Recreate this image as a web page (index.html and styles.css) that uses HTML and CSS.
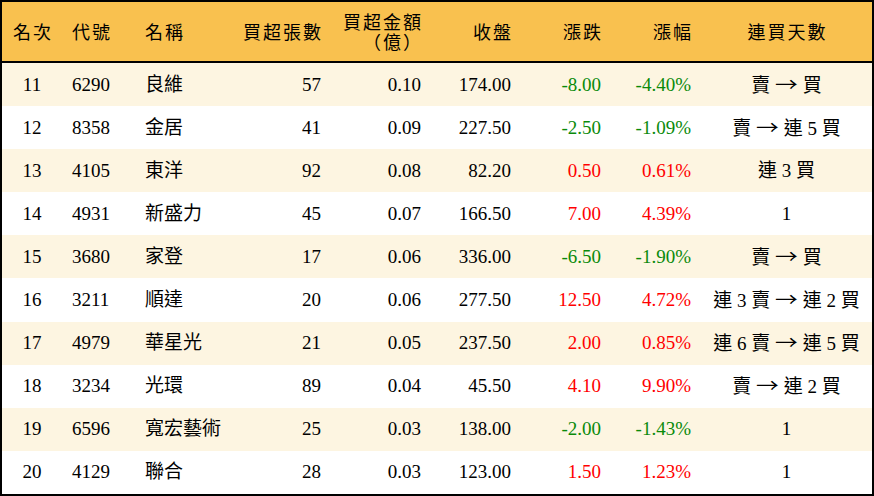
FILE: index.html
```html
<!DOCTYPE html>
<html lang="zh-Hant">
<head>
<meta charset="utf-8">
<title>買超排行</title>
<link rel="stylesheet" href="styles.css">
</head>
<body>
<table class="rank">
  <colgroup>
    <col class="c-rank"><col class="c-code"><col class="c-name"><col class="c-vol"><col class="c-amt"><col class="c-close"><col class="c-chg"><col class="c-pct"><col class="c-days">
  </colgroup>
  <thead>
    <tr>
      <th class="ctr">名次</th>
      <th class="lft">代號</th>
      <th class="lft">名稱</th>
      <th class="rgt">買超張數</th>
      <th class="rgt two">買超金額<br>（億）</th>
      <th class="rgt">收盤</th>
      <th class="rgt">漲跌</th>
      <th class="rgt">漲幅</th>
      <th class="ctr">連買天數</th>
    </tr>
  </thead>
  <tbody>
    <tr><td class="ctr">11</td><td class="lft">6290</td><td class="lft">良維</td><td class="rgt">57</td><td class="rgt">0.10</td><td class="rgt">174.00</td><td class="rgt dn">-8.00</td><td class="rgt dn">-4.40%</td><td class="ctr days">賣 <span class="arr">→</span> 買</td></tr>
    <tr><td class="ctr">12</td><td class="lft">8358</td><td class="lft">金居</td><td class="rgt">41</td><td class="rgt">0.09</td><td class="rgt">227.50</td><td class="rgt dn">-2.50</td><td class="rgt dn">-1.09%</td><td class="ctr days">賣 <span class="arr">→</span> 連 5 買</td></tr>
    <tr><td class="ctr">13</td><td class="lft">4105</td><td class="lft">東洋</td><td class="rgt">92</td><td class="rgt">0.08</td><td class="rgt">82.20</td><td class="rgt up">0.50</td><td class="rgt up">0.61%</td><td class="ctr days">連 3 買</td></tr>
    <tr><td class="ctr">14</td><td class="lft">4931</td><td class="lft">新盛力</td><td class="rgt">45</td><td class="rgt">0.07</td><td class="rgt">166.50</td><td class="rgt up">7.00</td><td class="rgt up">4.39%</td><td class="ctr days">1</td></tr>
    <tr><td class="ctr">15</td><td class="lft">3680</td><td class="lft">家登</td><td class="rgt">17</td><td class="rgt">0.06</td><td class="rgt">336.00</td><td class="rgt dn">-6.50</td><td class="rgt dn">-1.90%</td><td class="ctr days">賣 <span class="arr">→</span> 買</td></tr>
    <tr><td class="ctr">16</td><td class="lft">3211</td><td class="lft">順達</td><td class="rgt">20</td><td class="rgt">0.06</td><td class="rgt">277.50</td><td class="rgt up">12.50</td><td class="rgt up">4.72%</td><td class="ctr days">連 3 賣 <span class="arr">→</span> 連 2 買</td></tr>
    <tr><td class="ctr">17</td><td class="lft">4979</td><td class="lft">華星光</td><td class="rgt">21</td><td class="rgt">0.05</td><td class="rgt">237.50</td><td class="rgt up">2.00</td><td class="rgt up">0.85%</td><td class="ctr days">連 6 賣 <span class="arr">→</span> 連 5 買</td></tr>
    <tr><td class="ctr">18</td><td class="lft">3234</td><td class="lft">光環</td><td class="rgt">89</td><td class="rgt">0.04</td><td class="rgt">45.50</td><td class="rgt up">4.10</td><td class="rgt up">9.90%</td><td class="ctr days">賣 <span class="arr">→</span> 連 2 買</td></tr>
    <tr><td class="ctr">19</td><td class="lft">6596</td><td class="lft">寬宏藝術</td><td class="rgt">25</td><td class="rgt">0.03</td><td class="rgt">138.00</td><td class="rgt dn">-2.00</td><td class="rgt dn">-1.43%</td><td class="ctr days">1</td></tr>
    <tr><td class="ctr">20</td><td class="lft">4129</td><td class="lft">聯合</td><td class="rgt">28</td><td class="rgt">0.03</td><td class="rgt">123.00</td><td class="rgt up">1.50</td><td class="rgt up">1.23%</td><td class="ctr days">1</td></tr>
  </tbody>
</table>
</body>
</html>
```
FILE: styles.css
```css
html, body {
  margin: 0;
  padding: 0;
  background: #ffffff;
}

.rank {
  width: 874px;
  height: 496px;
  border-collapse: separate;
  border-spacing: 0;
  table-layout: fixed;
  border: 2px solid #000;
  box-sizing: border-box;
  font-family: "Liberation Serif", "Noto Sans CJK TC", serif;
  font-size: 19px;
  color: #000;
}

.c-rank { width: 60px; }
.c-code { width: 73px; }
.c-name { width: 96px; }
.c-vol { width: 100px; }
.c-amt { width: 100px; }
.c-close { width: 90px; }
.c-chg { width: 90px; }
.c-pct { width: 90px; }
.c-days { width: 171px; }

.rank th {
  background: #f9c14f;
  height: 61px;
  box-sizing: border-box;
  font-weight: normal;
  font-size: 18px;
  letter-spacing: 2px;
  line-height: 20px;
  border-bottom: 2px solid #000;
  padding: 3px 0 0 10px;
  vertical-align: middle;
  white-space: nowrap;
}

.rank th.rgt { padding: 3px 8px 0 0; }
.rank th.ctr { padding: 3px 0 0 2px; }

.rank td {
  height: 43.1px;
  padding: 0 10px;
  vertical-align: middle;
  white-space: nowrap;
  line-height: 22px;
}

.rank td.days { padding: 0; }

.arr {
  font-family: "Noto Sans CJK TC", sans-serif;
  display: inline-block;
  margin: 0 2px;
  transform: scaleX(1.2);
}

.rank tbody tr:nth-child(odd) td { background: #fdf5e1; }
.rank tbody tr:nth-child(even) td { background: #ffffff; }

.ctr { text-align: center; }
.lft { text-align: left; }
.rgt { text-align: right; }

.dn { color: #0a8a0a; }
.up { color: #ff0000; }
```
